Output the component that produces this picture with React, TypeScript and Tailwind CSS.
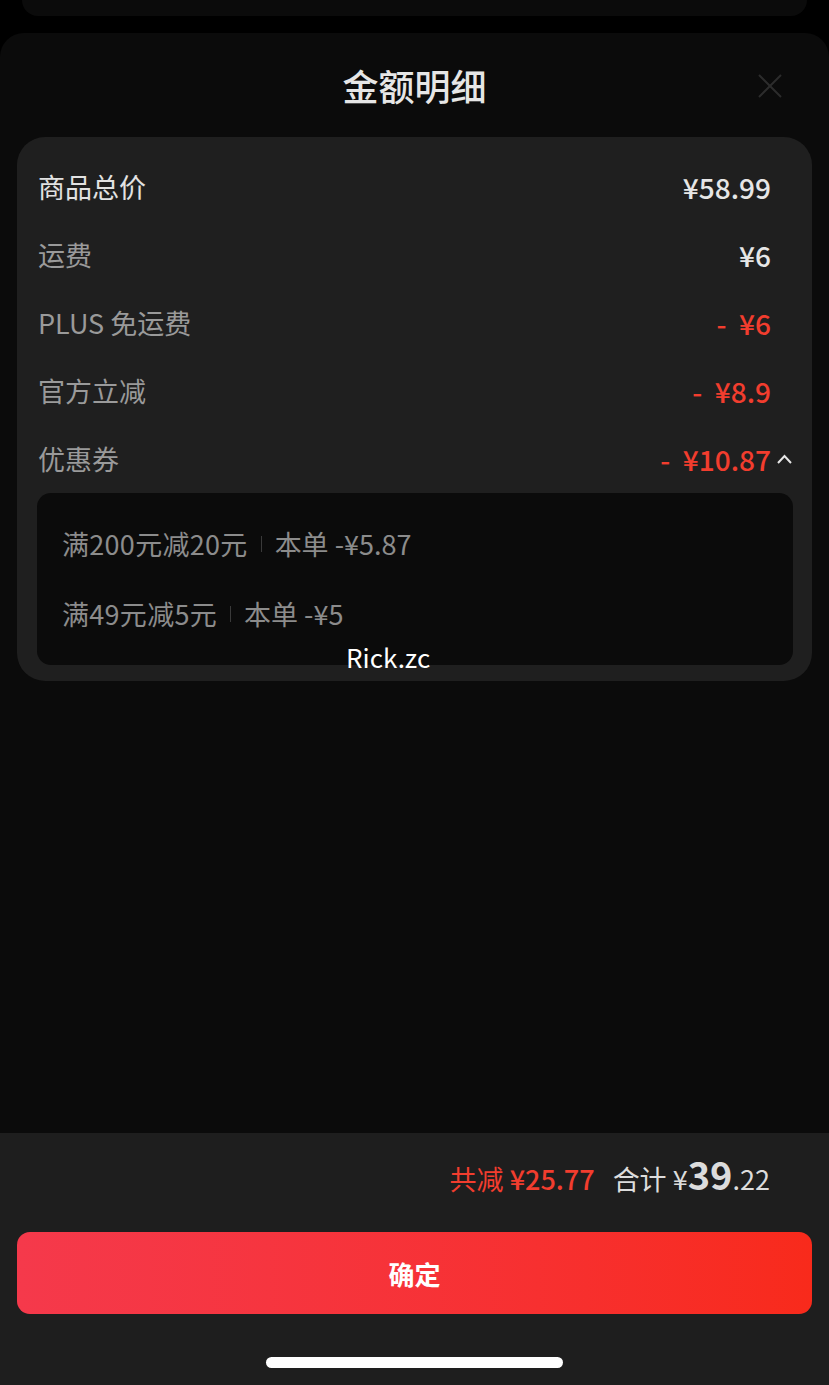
import React from "react";

const font = { fontFamily: '"Noto Sans CJK SC", "Noto Sans", sans-serif' };

const rows = [
  { label: "商品总价", value: "¥58.99", main: true },
  { label: "运费", value: "¥6" },
  { label: "PLUS 免运费", value: "-  ¥6", red: true },
  { label: "官方立减", value: "-  ¥8.9", red: true },
];

const coupons = [
  { title: "满200元减20元", off: "本单 -¥5.87" },
  { title: "满49元减5元", off: "本单 -¥5" },
];

const App = () => {
  return (
    <div
      className="relative flex h-[1385px] w-full flex-col overflow-hidden bg-black"
      style={font}
    >
      <div className="mx-[22px] h-[16px] rounded-b-[20px] bg-[#0b0b0b]" />

      <div className="mt-[17px] flex flex-1 flex-col rounded-t-[24px] bg-[#0b0b0b]">
        <div className="relative flex h-[104px] justify-center pt-[30px]">
          <h2 className="text-[36px] font-medium leading-[44px] text-[#e6e6e6]">
            金额明细
          </h2>
          <svg
            className="absolute right-[46px] top-[40px]"
            width="26"
            height="26"
            viewBox="0 0 26 26"
            fill="none"
            stroke="#2c2c2c"
            strokeWidth="2"
          >
            <path d="M2 2 L24 24 M24 2 L2 24" />
          </svg>
        </div>

        <div className="mx-[17px] rounded-[28px] bg-[#1f1f1f] pb-[16px] pt-[16px]">
          {rows.map((r) => (
            <div
              key={r.label}
              className="flex h-[68px] items-center justify-between pl-[21px] pr-[41px] text-[28px]"
            >
              <span
                className={
                  r.main
                    ? "text-[27px] text-[#e2e2e2]"
                    : "text-[27px] text-[#9a9a9a]"
                }
              >
                {r.label}
              </span>
              <span
                className={
                  r.red
                    ? "whitespace-pre font-medium text-[#f23d2e]"
                    : "whitespace-pre font-medium text-[#e6e6e6]"
                }
              >
                {r.value}
              </span>
            </div>
          ))}
          <div className="flex h-[68px] items-center justify-between pl-[21px] pr-[19px] text-[28px]">
            <span className="text-[27px] text-[#9a9a9a]">优惠券</span>
            <span className="flex items-center gap-[5px]">
              <span className="whitespace-pre font-medium text-[#f23d2e]">
                {"-  ¥10.87"}
              </span>
              <svg
                width="17"
                height="12"
                viewBox="0 0 17 12"
                fill="none"
                stroke="#e6e6e6"
                strokeWidth="2"
              >
                <path d="M2 10 L8.5 3 L15 10" />
              </svg>
            </span>
          </div>

          <div className="ml-[20px] mr-[19px] rounded-[14px] bg-[#0b0b0b] pb-[16px] pt-[16px]">
            {coupons.map((c) => (
              <div
                key={c.title}
                className="flex h-[70px] items-center pl-[25px] text-[27px] text-[#8c8c8c]"
              >
                <span className="tracking-[0.3px]">{c.title}</span>
                <span className="mx-[13px] h-[16px] w-px bg-[#3a3a3a]" />
                <span>{c.off}</span>
              </div>
            ))}
          </div>
        </div>

        <div className="flex-1" />

        <div className="flex h-[252px] flex-col bg-[#1e1e1e]">
          <div className="flex h-[80px] items-center justify-end pr-[59px]">
            <div className="flex items-baseline gap-[18px]">
              <span className="text-[27px] text-[#f23d2e]">
                共减 <span className="font-medium">¥25.77</span>
              </span>
              <span className="text-[27px] text-[#dcdcdc]">
                合计 ¥<span className="text-[38px] font-semibold">39</span>
                .22
              </span>
            </div>
          </div>
          <button className="mx-[17px] mt-[19px] h-[82px] rounded-[13px] bg-gradient-to-r from-[#f5394b] to-[#f82a1b] text-[26px] font-bold text-white">
            确定
          </button>
          <div className="mx-auto mt-[43px] h-[11px] w-[297px] rounded-full bg-white" />
        </div>
      </div>

      <span className="absolute left-[346px] top-[640px] text-[26px] leading-[34px] text-white">
        Rick.zc
      </span>
    </div>
  );
};

export default App;
